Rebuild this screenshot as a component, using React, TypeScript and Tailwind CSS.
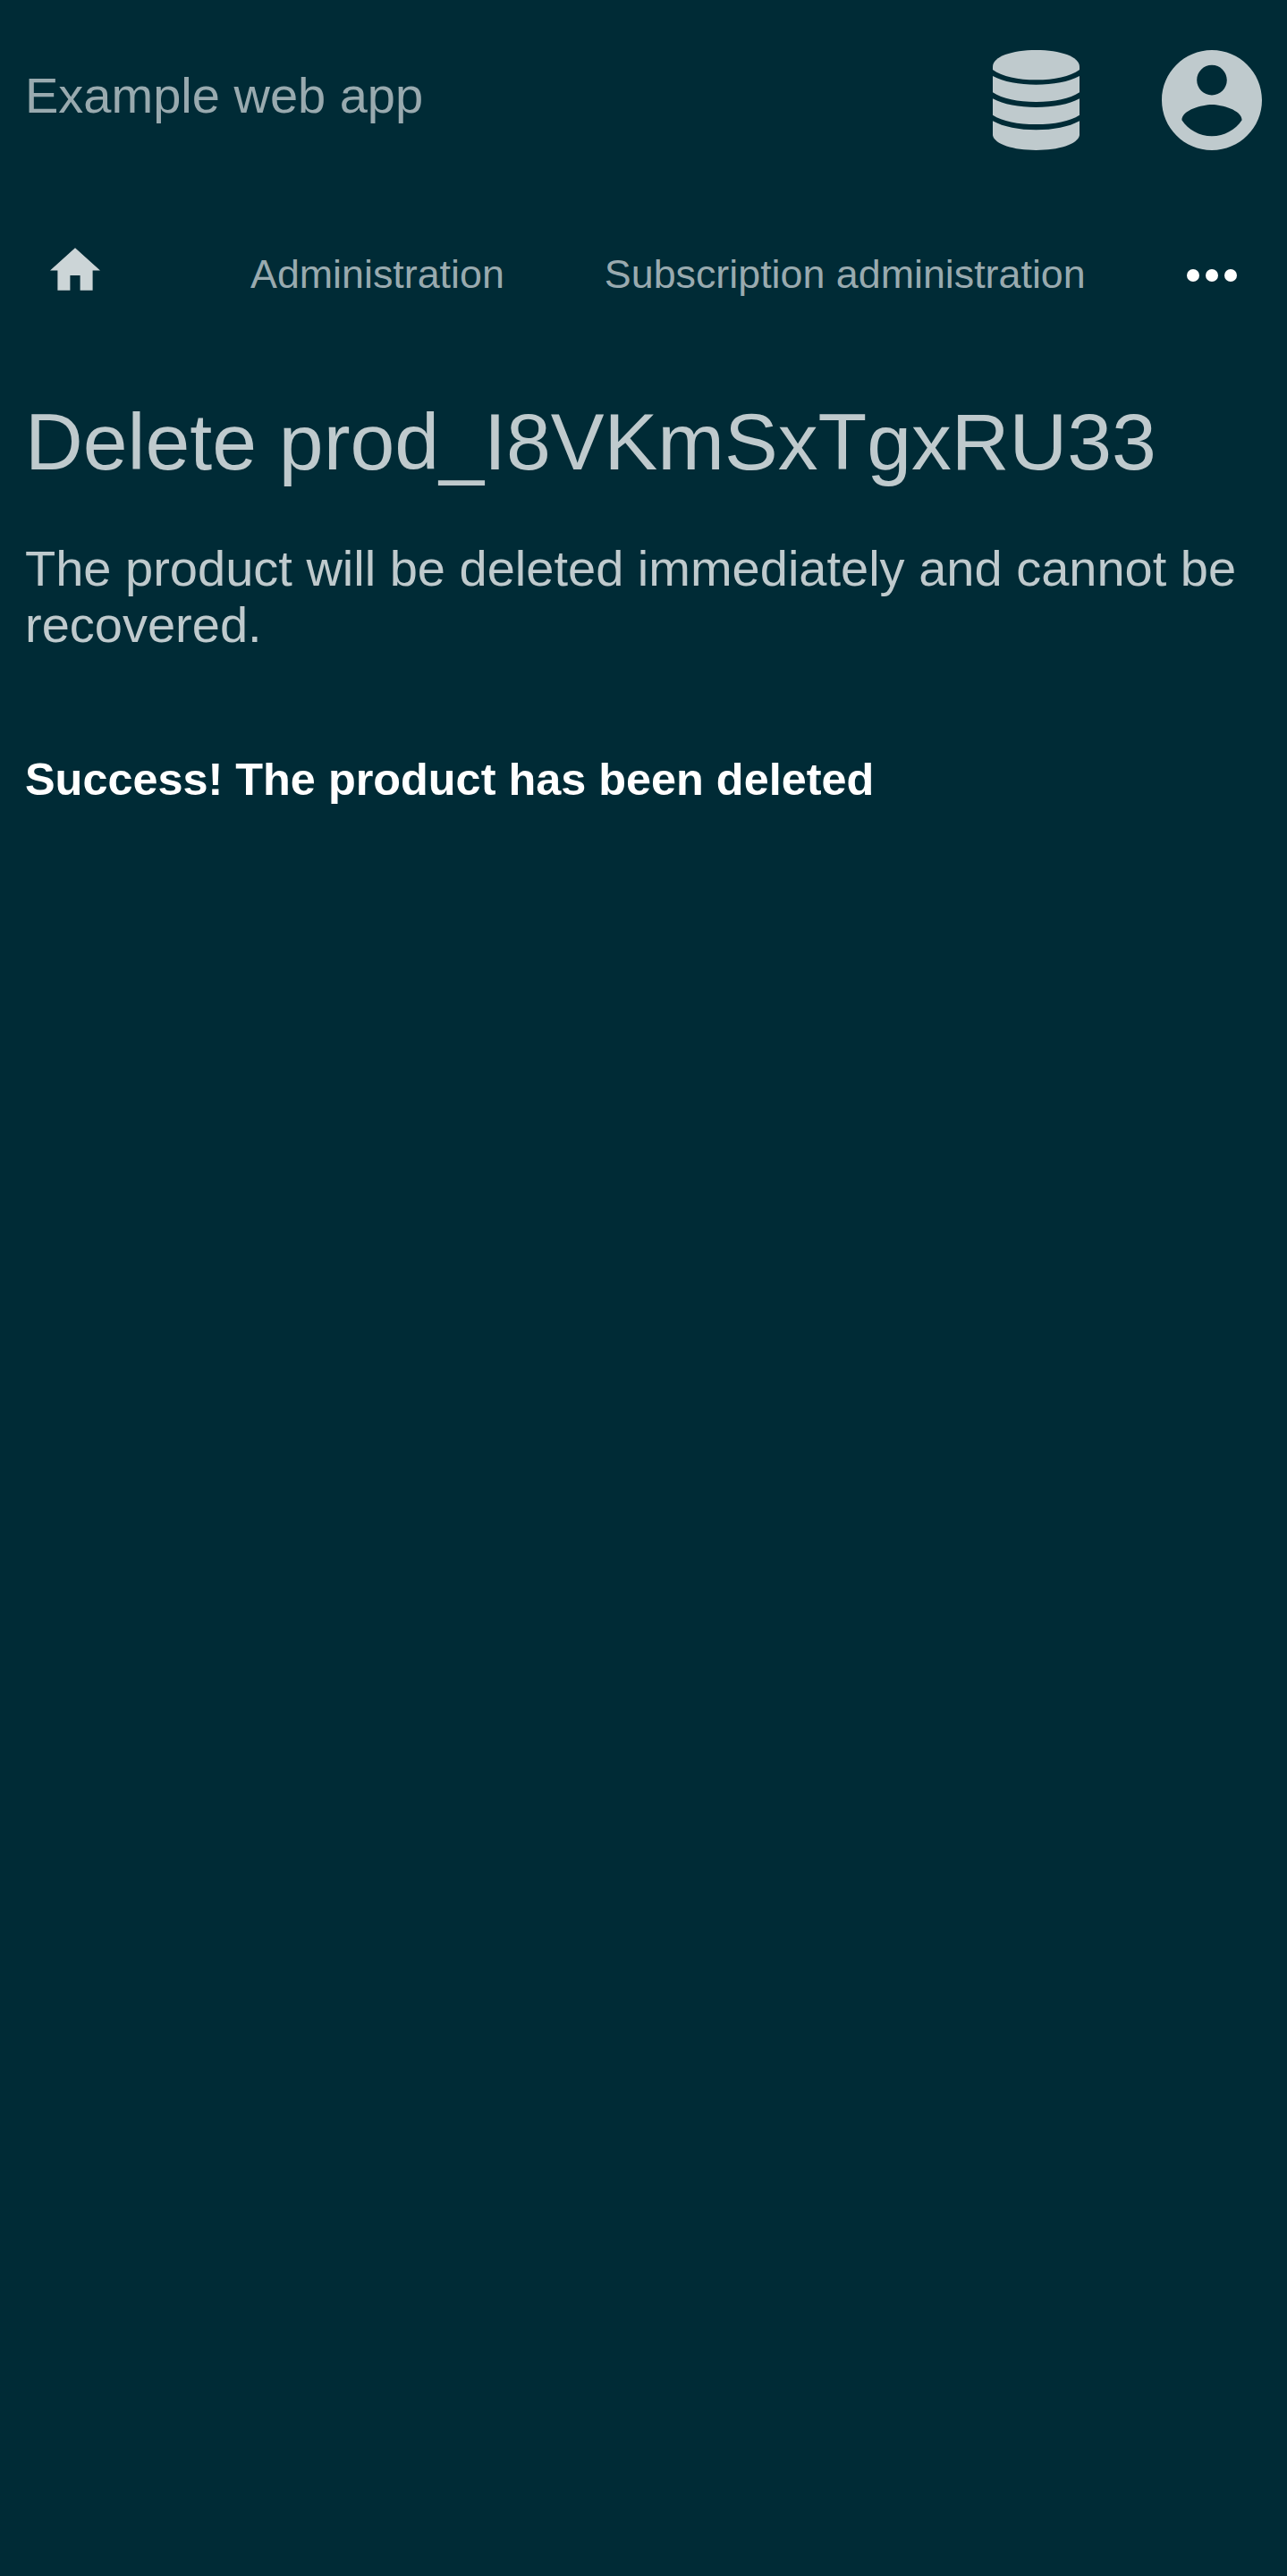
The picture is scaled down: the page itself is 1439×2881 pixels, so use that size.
function DatabaseIcon() {
  return (
    <svg className="h-28 w-[97px]" viewBox="0 0 290 336" preserveAspectRatio="none" fill="currentColor" aria-hidden="true">
      <path d="M0 56C0 22 64 0 145 0S290 22 290 56V66C258 89 206 100 145 100S32 89 0 66Z" />
      <path d="M0 87C36 107 88 116 145 116S254 107 290 87V142C258 164 206 174 145 174S32 164 0 142Z" />
      <path d="M0 163C36 183 88 192 145 192S254 183 290 163V218C258 239 206 249 145 249S32 239 0 218Z" />
      <path d="M0 238C36 258 88 268 145 268S254 258 290 238V286C284 317 220 336 145 336S6 317 0 286Z" />
    </svg>
  );
}

function AccountIcon() {
  return (
    <svg className="size-28" viewBox="2 2 20 20" fill="currentColor" aria-hidden="true">
      <path d="M12 2C6.48 2 2 6.48 2 12s4.48 10 10 10 10-4.48 10-10S17.52 2 12 2zm0 3c1.66 0 3 1.34 3 3s-1.34 3-3 3-3-1.34-3-3 1.34-3 3-3zm0 14.2c-2.5 0-4.71-1.28-6-3.22.03-1.99 4-3.08 6-3.08 1.99 0 5.97 1.09 6 3.08-1.29 1.94-3.5 3.22-6 3.22z" />
    </svg>
  );
}

function HomeIcon() {
  return (
    <svg className="h-12 w-14 text-[#ccd5d7]" viewBox="2 3 20 17" fill="currentColor" aria-hidden="true">
      <path d="M10 20v-6h4v6h5v-8h3L12 3 2 12h3v8z" />
    </svg>
  );
}

function MoreIcon() {
  return (
    <svg className="h-3.5 w-14 text-white" viewBox="0 0 16 4" fill="currentColor" aria-hidden="true">
      <circle cx="2" cy="2" r="2" />
      <circle cx="8" cy="2" r="2" />
      <circle cx="14" cy="2" r="2" />
    </svg>
  );
}

export default function App() {
  return (
    <div className="min-h-[2881px] w-full bg-[#002b36] px-7 font-['Liberation_Sans',sans-serif] text-[#bfcacd]">
      <header className="flex h-56 items-start justify-between">
        <span className="pt-[75px] text-[56px] leading-[63px] text-[#99aaaf]">Example web app</span>
        <div className="flex gap-[92px] pt-14">
          <DatabaseIcon />
          <AccountIcon />
        </div>
      </header>
      <nav className="flex h-[162px] items-start px-7 text-[44.8px] leading-[51px] text-[#99aaaf]">
        <a className="mr-42 pt-[53px]"><HomeIcon /></a>
        <a className="mr-28 pt-[57px]">Administration</a>
        <a className="pt-[57px]">Subscription administration</a>
        <button className="ml-auto pt-[77px]" aria-label="More"><MoreIcon /></button>
      </nav>
      <h1 className="mt-[57px] text-[89.6px] leading-[103px]">Delete prod_I8VKmSxTgxRU33</h1>
      <p className="mt-[58px] text-[56px] leading-[63px]">The product will be deleted immediately and cannot be recovered.</p>
      <p className="mt-[113px] text-[50.4px] leading-[57px] font-bold text-white">Success! The product has been deleted</p>
    </div>
  );
}
